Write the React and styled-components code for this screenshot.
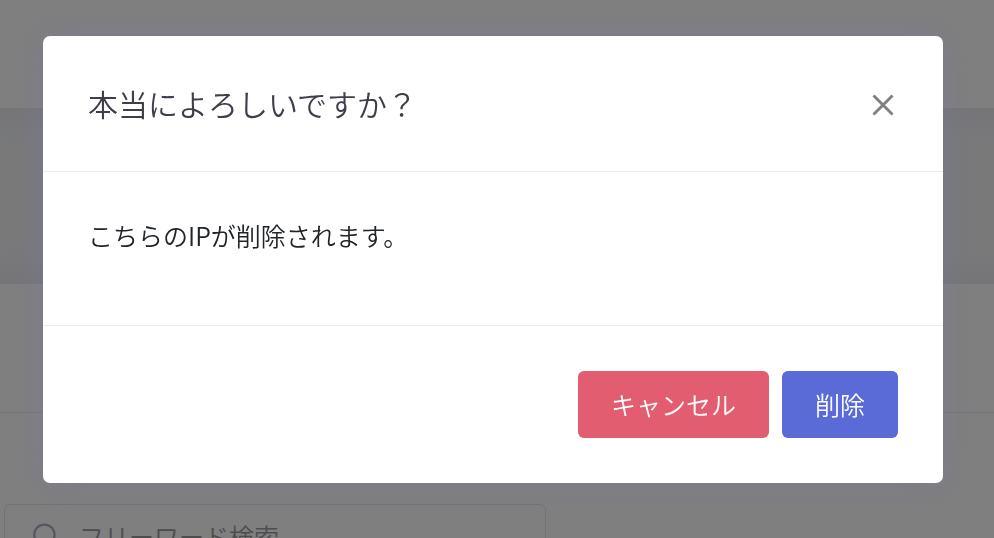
import React, {useState} from 'react';
import styled, {createGlobalStyle} from 'styled-components';

const GlobalStyle = createGlobalStyle`
  * {
    box-sizing: border-box;
  }

  body {
    margin: 0;
    background: #ffffff;
    overflow: hidden;
  }

  body, button, input {
    font-family: "Noto Sans CJK JP", "Noto Sans", sans-serif;
    font-weight: 350;
  }
`

const Page = styled.div`
  height: 100vh;
  overflow: hidden;
`

const TopBar = styled.header`
  height: 108px;
`

const SubHeader = styled.div`
  height: 176px;
  background: linear-gradient(#ebebf2, #f2f3f5 36px, #f2f3f5 140px, #ebebf2);
`

const PanelHead = styled.div`
  height: 129px;
  border-bottom: 1px solid #e6e7ee;
`

const SearchBox = styled.label`
  display: flex;
  align-items: center;
  gap: 20px;
  width: 542px;
  height: 66px;
  margin: 91px 0 0 4px;
  padding: 0 26px 2px;
  border: 1px solid #e2e5ec;
  border-radius: 6px;

  svg {
    flex: none;
  }
`

const SearchInput = styled.input`
  flex: 1;
  min-width: 0;
  padding: 0;
  border: 0;
  outline: 0;
  background: transparent;
  color: #575962;
  font-size: 25px;

  &::placeholder {
    color: #9a9aa0;
    opacity: 1;
  }
`

const Overlay = styled.div`
  position: fixed;
  inset: 0;
  padding: 36px 51px 36px 43px;
  overflow: hidden;
  background: rgba(0, 0, 0, 0.5);
`

const Dialog = styled.div`
  background: #ffffff;
  border-radius: 7px;
  box-shadow: 0 0 32px rgba(120, 120, 155, 0.5);
`

const DialogHeader = styled.div`
  display: flex;
  align-items: center;
  justify-content: space-between;
  height: 136px;
  padding: 0 45px;
  border-bottom: 1px solid #ebebed;
`

const Title = styled.h1`
  margin: 0;
  padding-bottom: 2px;
  color: #3f3e4a;
  font-size: 30px;
  font-weight: 350;
  line-height: 44px;
`

const CloseButton = styled.button`
  display: flex;
  padding: 6px 4px 4px;
  border: 0;
  background: transparent;
  cursor: pointer;
`

const DialogBody = styled.div`
  padding: 44px 45px 71px;
  border-bottom: 1px solid #ebebed;
  color: #212529;
  font-size: 25px;
  line-height: 38px;

  p {
    margin: 0;
  }
`

const DialogFooter = styled.div`
  display: flex;
  justify-content: flex-end;
  gap: 13px;
  padding: 45px;
`

const Button = styled.button`
  height: 67px;
  padding: 0 33px 2px;
  border: 0;
  border-radius: 6px;
  background: ${props => props.$color};
  color: #ffffff;
  font-size: 25px;
  line-height: 38px;
  cursor: pointer;
`

const App = () => {
  const [open, setOpen] = useState(true);

  const handleClose = () => setOpen(false);

  return (
    <>
      <GlobalStyle />
      <Page>
        <TopBar />
        <SubHeader />
        <PanelHead />
        <SearchBox>
          <svg width="28" height="28" viewBox="0 0 28 28" fill="none" stroke="#aeaabf" strokeWidth="2.2" aria-hidden="true">
            <circle cx="13.4" cy="12.8" r="10.2" />
            <path d="M20 20l7 7" />
          </svg>
          <SearchInput type="text" placeholder="フリーワード検索" aria-label="フリーワード検索" />
        </SearchBox>
      </Page>
      {open && (
        <Overlay>
          <Dialog role="dialog" aria-modal="true" aria-labelledby="dialog-title">
            <DialogHeader>
              <Title id="dialog-title">本当によろしいですか？</Title>
              <CloseButton type="button" aria-label="閉じる" onClick={handleClose}>
                <svg width="22" height="22" viewBox="0 0 22 22" stroke="#808080" strokeWidth="2.9" aria-hidden="true">
                  <path d="M1.5 1.5l19 19M20.5 1.5l-19 19" />
                </svg>
              </CloseButton>
            </DialogHeader>
            <DialogBody>
              <p>こちらのIPが削除されます。</p>
            </DialogBody>
            <DialogFooter>
              <Button type="button" $color="#e25d70" onClick={handleClose}>キャンセル</Button>
              <Button type="button" $color="#5a6ad6" onClick={handleClose}>削除</Button>
            </DialogFooter>
          </Dialog>
        </Overlay>
      )}
    </>
  )
}

export default App;
